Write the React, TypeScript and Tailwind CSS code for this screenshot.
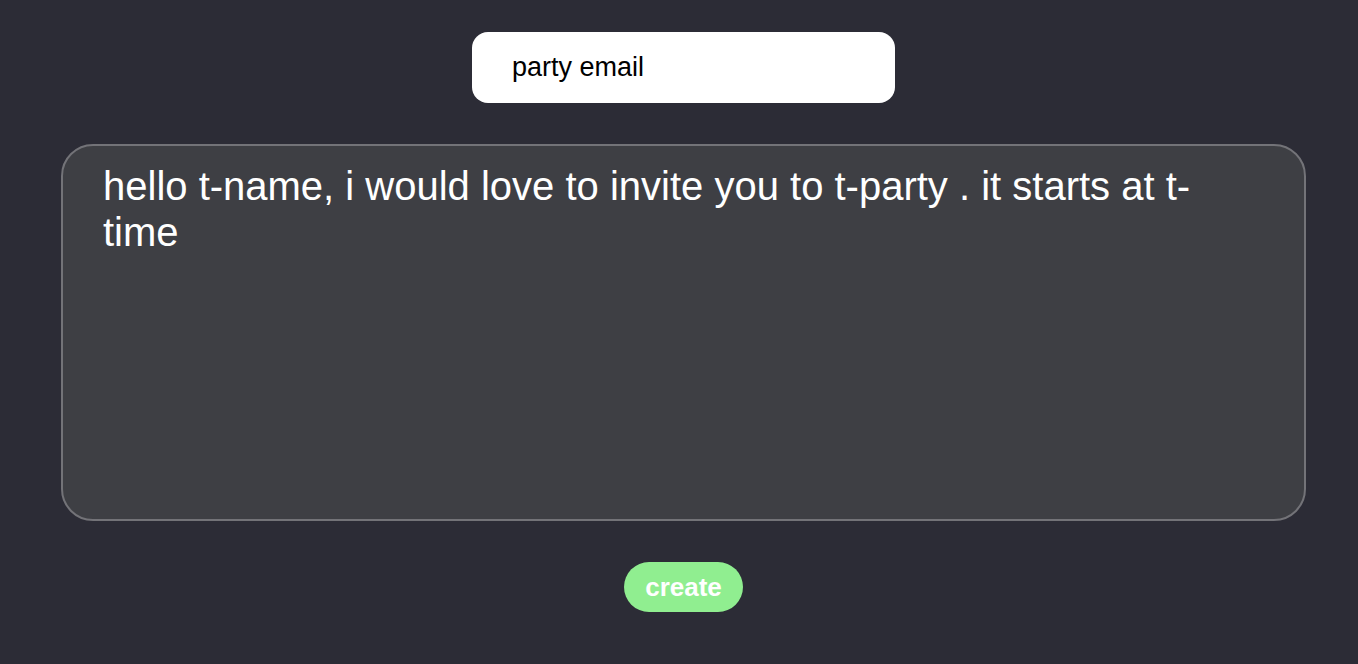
import { useEffect, useRef, useState } from "react";

const initialBody =
  "hello t-name, i would love to invite you to t-party . it starts at t-time ";

export default function App() {
  const [title, setTitle] = useState("party email");
  const [body, setBody] = useState(initialBody);
  const areaRef = useRef<HTMLTextAreaElement>(null);

  useEffect(() => {
    const el = areaRef.current;
    if (!el) return;
    el.focus();
    el.setSelectionRange(el.value.length, el.value.length);
  }, []);

  return (
    <main className="flex min-h-[664px] w-full flex-col items-center gap-[41px] bg-[#2c2c36] pt-[32px] pl-[9px] font-['Liberation_Sans',Arial,sans-serif]">
      <input
        value={title}
        onChange={(e) => setTitle(e.target.value)}
        className="h-[71px] w-[423px] rounded-[16px] bg-white px-[40px] text-[27px] text-black outline-none"
      />
      <textarea
        ref={areaRef}
        value={body}
        onChange={(e) => setBody(e.target.value)}
        className="h-[377px] w-[1245px] resize-none rounded-[32px] border-2 border-[#737378] bg-[#3e3f44] pt-[17px] pl-[40px] pr-[52px] text-[40px] leading-[46px] text-white caret-white outline-none"
      />
      <button className="h-[50px] rounded-full bg-[#90ee90] px-[21px] text-[26px] font-bold text-white">
        create
      </button>
    </main>
  );
}
